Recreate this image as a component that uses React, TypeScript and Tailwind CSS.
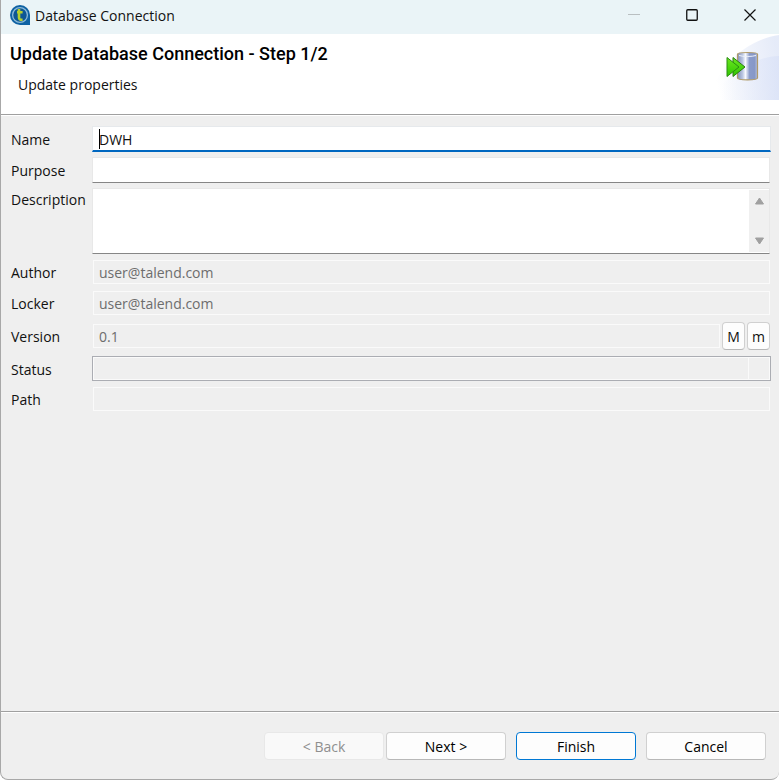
import type { ReactNode } from 'react';

const readOnlyBox =
  'h-6 w-full min-w-0 border border-[#fafafa] bg-[#efefef] px-[5px] text-[#6d6d6d] outline-none';

const dialogButton =
  'h-7 w-[120px] rounded border border-[#d0d0d0] border-b-[#b8b8b8] bg-[#fdfdfd] pt-0.5 text-black';

function Row({ id, label, className, children }: { id: string; label: string; className: string; children: ReactNode }) {
  return (
    <div className={`grid grid-cols-[81px_minmax(0,1fr)] ${className}`}>
      <label htmlFor={id} className="pt-0.5 leading-5">
        {label}
      </label>
      {children}
    </div>
  );
}

function AppIcon() {
  return (
    <svg width="20" height="20" viewBox="0 0 20 20" aria-hidden="true">
      <path d="M10 0a10 10 0 1 0 0 20h10V10A10 10 0 0 0 10 0Z" fill="#0f62a3" />
      <circle cx="10" cy="10" r="7.4" fill="#0e5795" stroke="#8dbbd9" strokeWidth="1.3" />
      <path d="M9 4v8.600c0 1.700 1 2.300 3.600 2.100M7 7.300h5.600" fill="none" stroke="#b5cf2f" strokeWidth="2.600" />
    </svg>
  );
}

function DatabaseBanner() {
  return (
    <svg width="80" height="66" viewBox="0 0 80 66" aria-hidden="true">
      <defs>
        <linearGradient id="sky" x1="0" x2="1" y1="0.6" y2="0.4">
          <stop offset="0.1" stopColor="#fff" />
          <stop offset="1" stopColor="#dfe6f7" />
        </linearGradient>
        <linearGradient id="sky2" x1="0" x2="1">
          <stop offset="0.2" stopColor="#e4eafa" stopOpacity="0" />
          <stop offset="1" stopColor="#dae2f7" />
        </linearGradient>
        <linearGradient id="can" x1="0" x2="1">
          <stop offset="0" stopColor="#8591b8" />
          <stop offset="0.25" stopColor="#bac6e2" />
          <stop offset="0.4" stopColor="#f8faff" />
          <stop offset="0.6" stopColor="#8a9bca" />
          <stop offset="0.85" stopColor="#8798c7" />
          <stop offset="1" stopColor="#b4c0df" />
        </linearGradient>
        <linearGradient id="arrow" x1="0" x2="0" y1="0" y2="1">
          <stop offset="0" stopColor="#6be820" />
          <stop offset="1" stopColor="#2fc400" />
        </linearGradient>
      </defs>
      <path d="M8 66C20 32 46 6 80 1v65Z" fill="url(#sky)" opacity="0.8" />
      <path d="M8 66C32 40 52 23 80 22v44Z" fill="url(#sky2)" opacity="0.8" />
      <path d="M38.500 20c0-2 20-2 20 0v24c0 2.500-20 2.500-20 0Z" fill="url(#can)" stroke="#b09a68" strokeWidth="1.200" />
      <path d="M40 21.500c4 1.300 13 1.300 17 0" fill="none" stroke="#eef2fb" />
      <path d="M34 23.500 46 33 34 42.500Z" fill="url(#arrow)" stroke="#2b7d12" />
      <path d="M28 23.500 40 33 28 42.500Z" fill="url(#arrow)" stroke="#2b8d12" />
    </svg>
  );
}

export default function App() {
  return (
    <main className="flex min-h-screen flex-col rounded-b-lg border-b border-l border-[#a8a8a8] bg-[#efefef] font-['Open_Sans','Noto_Sans',sans-serif] text-sm text-[#111]">
      <header className="flex h-[34px] shrink-0 items-center bg-[#eaf4f7] pb-1 pl-[9px]">
        <AppIcon />
        <span className="ml-[5px] flex-1 pt-0.5 leading-5">Database Connection</span>
        <button aria-label="Minimize" disabled className="grid h-[30px] w-[58px] place-items-center">
          <svg width="12" height="12" aria-hidden="true"><path d="M0 5.500h12" stroke="#b9bfc1" /></svg>
        </button>
        <button aria-label="Maximize" className="grid h-[30px] w-[58px] place-items-center">
          <svg width="12" height="12" aria-hidden="true"><rect x=".75" y=".75" width="10.500" height="10.500" rx="1" fill="none" stroke="#111" strokeWidth="1.300" /></svg>
        </button>
        <button aria-label="Close" className="grid h-[30px] w-[58px] place-items-center">
          <svg width="12" height="12" aria-hidden="true"><path d="m.5.5 11 11m0-11-11 11" stroke="#111" strokeWidth="1.200" /></svg>
        </button>
      </header>

      <section className="flex h-[81px] shrink-0 justify-between border-b border-[#a0a0a0] bg-white">
        <div className="pt-2.5 pl-[9px]">
          <h1 className="font-[Roboto,sans-serif] text-lg leading-5 font-medium text-black">
            Update Database Connection - Step 1/2
          </h1>
          <p className="mt-[11px] pl-2 leading-5">Update properties</p>
        </div>
        <DatabaseBanner />
      </section>

      <form id="connection" onSubmit={(e) => e.preventDefault()} className="flex flex-1 flex-col gap-[5px] border-t border-white pt-2.5 pr-2 pl-2.5">
        <Row id="name" label="Name" className="h-[26px] items-center">
          <div className="relative">
            <input id="name" defaultValue="DWH" className="block h-[26px] w-full border-x border-t border-b-2 border-[#e6e9ec] border-b-[#0067c0] bg-white px-1.5 pt-0.5 outline-none" />
            <span className="absolute top-[3px] left-[7px] h-5 w-px bg-black" />
          </div>
        </Row>
        <Row id="purpose" label="Purpose" className="h-[26px] items-center">
          <div className="flex pr-px">
            <input id="purpose" className="h-[26px] w-full min-w-0 border border-[#e8e8e8] border-b-[#868686] bg-white px-1.5 outline-none" />
          </div>
        </Row>
        <Row id="description" label="Description" className="h-[66px] items-start">
          <div className="mr-px flex h-full border border-[#e8e8e8] border-b-[#868686] bg-white">
            <textarea id="description" className="min-w-0 flex-1 resize-none px-1.5 outline-none" />
            <div className="mt-px mb-px flex w-5 flex-col items-center justify-between bg-[#f0f0f0] py-[7px]">
              <button type="button" aria-label="Scroll up">
                <svg className="block" width="9" height="8" aria-hidden="true"><path d="M4.500 1 8.500 7h-8Z" fill="#a0a0a0" stroke="#a0a0a0" strokeLinejoin="round" /></svg>
              </button>
              <button type="button" aria-label="Scroll down">
                <svg className="block" width="9" height="8" aria-hidden="true"><path d="M4.500 7 8.500 1h-8Z" fill="#a0a0a0" stroke="#a0a0a0" strokeLinejoin="round" /></svg>
              </button>
            </div>
          </div>
        </Row>
        <Row id="author" label="Author" className="h-[26px] items-center">
          <div className="flex px-px">
            <input id="author" readOnly value="user@talend.com" className={readOnlyBox} />
          </div>
        </Row>
        <Row id="locker" label="Locker" className="h-[26px] items-center">
          <div className="flex px-px">
            <input id="locker" readOnly value="user@talend.com" className={readOnlyBox} />
          </div>
        </Row>
        <Row id="version" label="Version" className="h-[30px] items-center">
          <div className="flex items-center gap-0.5 px-px">
            <input id="version" readOnly value="0.1" className={readOnlyBox} />
            <button type="button" className="h-7 w-[23px] shrink-0 rounded border border-[#d0d0d0] border-b-[#b8b8b8] bg-[#fdfdfd] pt-0.5">M</button>
            <button type="button" className="h-7 w-[23px] shrink-0 rounded border border-[#d0d0d0] border-b-[#b8b8b8] bg-[#fdfdfd] pt-0.5">m</button>
          </div>
        </Row>
        <Row id="status" label="Status" className="h-[25px] items-center">
          <div className="flex h-[25px] border border-[#abadb3]">
            <select id="status" disabled className="min-w-0 flex-1 appearance-none border border-[#fafafa] bg-[#efefef]" />
            <span className="w-[21px] border-y border-r border-[#fafafa]" />
          </div>
        </Row>
        <Row id="path" label="Path" className="h-[26px] items-center">
          <div className="flex px-px">
            <input id="path" readOnly className={readOnlyBox} />
          </div>
        </Row>
      </form>

      <footer className="flex shrink-0 justify-end border-t border-[#a0a0a0]">
        <div className="flex w-full justify-end border-t border-white pt-[19px] pr-[13px] pb-[19px]">
          <button disabled className="mr-0.5 h-7 w-[120px] rounded border border-[#e8e8e8] bg-[#f9f9f9] pt-0.5 text-[#8f8f8f]">&lt; Back</button>
          <button className={`mr-2.5 ${dialogButton}`}>Next &gt;</button>
          <button type="submit" form="connection" className="mr-2.5 h-7 w-[120px] rounded border border-[#0078d4] bg-[#fdfdfd] pt-0.5 text-black">Finish</button>
          <button className={dialogButton}>Cancel</button>
        </div>
      </footer>
    </main>
  );
}
